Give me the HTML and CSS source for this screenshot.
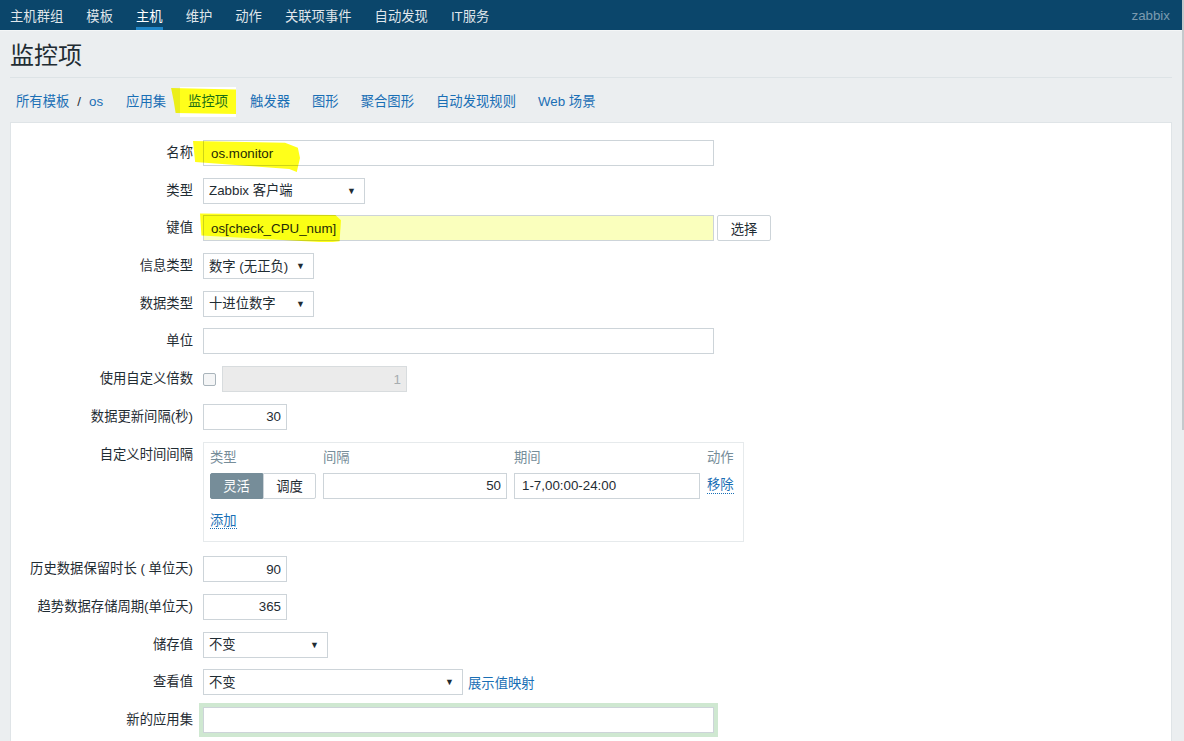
FILE: index.html
```html
<!DOCTYPE html>
<html lang="zh-CN">
<head>
<meta charset="utf-8">
<title>监控项</title>
<link rel="stylesheet" href="styles.css">
</head>
<body>
<div class="scrollbar"></div>
<header class="topnav">
  <nav class="menu">
    <a>主机群组</a>
    <a>模板</a>
    <a class="active">主机</a>
    <a>维护</a>
    <a>动作</a>
    <a>关联项事件</a>
    <a>自动发现</a>
    <a>IT服务</a>
  </nav>
  <span class="brand">zabbix</span>
</header>
<main class="content">
  <h1 class="title">监控项</h1>
  <ul class="tabs">
    <li class="crumbs"><a>所有模板</a><span class="sep">/</span><a>os</a></li>
    <li><a>应用集</a></li>
    <li class="selected"><a>监控项</a><span class="marker m-tab"></span></li>
    <li><a>触发器</a></li>
    <li><a>图形</a></li>
    <li><a>聚合图形</a></li>
    <li><a>自动发现规则</a></li>
    <li><a>Web 场景</a></li>
  </ul>
  <section class="card">
    <form class="form">
      <label class="lbl">名称</label>
      <div class="field">
        <span class="mark-wrap"><input class="txt w-wide" value="os.monitor"><span class="marker m-name"></span></span>
      </div>

      <label class="lbl">类型</label>
      <div class="field">
        <span class="select w-type"><select><option>Zabbix 客户端</option></select></span>
      </div>

      <label class="lbl">键值</label>
      <div class="field">
        <span class="mark-wrap"><input class="txt w-wide autofill" value="os[check_CPU_num]"><span class="marker m-key"></span></span>
        <button type="button" class="btn">选择</button>
      </div>

      <label class="lbl">信息类型</label>
      <div class="field">
        <span class="select w-small"><select><option>数字 (无正负)</option></select></span>
      </div>

      <label class="lbl">数据类型</label>
      <div class="field">
        <span class="select w-small"><select><option>十进位数字</option></select></span>
      </div>

      <label class="lbl">单位</label>
      <div class="field">
        <input class="txt w-wide" value="">
      </div>

      <label class="lbl">使用自定义倍数</label>
      <div class="field">
        <input type="checkbox" class="chk">
        <input class="txt w-mult num" value="1" disabled>
      </div>

      <label class="lbl">数据更新间隔(秒)</label>
      <div class="field">
        <input class="txt w-num num" value="30">
      </div>

      <label class="lbl">自定义时间间隔</label>
      <div class="field top">
        <div class="intervals">
          <div class="iv-grid">
            <span class="iv-head">类型</span>
            <span class="iv-head">间隔</span>
            <span class="iv-head">期间</span>
            <span class="iv-head">动作</span>

            <span class="seg"><button type="button" class="seg-btn on">灵活</button><button type="button" class="seg-btn">调度</button></span>
            <input class="txt num iv-input" value="50">
            <input class="txt iv-input" value="1-7,00:00-24:00">
            <a class="dlink">移除</a>
          </div>
          <div class="iv-add"><a class="dlink">添加</a></div>
        </div>
      </div>

      <label class="lbl">历史数据保留时长 ( 单位天)</label>
      <div class="field">
        <input class="txt w-num num" value="90">
      </div>

      <label class="lbl">趋势数据存储周期(单位天)</label>
      <div class="field">
        <input class="txt w-num num" value="365">
      </div>

      <label class="lbl">储存值</label>
      <div class="field">
        <span class="select w-store"><select><option>不变</option></select></span>
      </div>

      <label class="lbl">查看值</label>
      <div class="field">
        <span class="select w-show"><select><option>不变</option></select></span>
        <a class="link map-link">展示值映射</a>
      </div>

      <label class="lbl">新的应用集</label>
      <div class="field">
        <input class="txt w-wide focused" value="">
      </div>
    </form>
  </section>
</main>
</body>
</html>
```

FILE: styles.css
```css
* { box-sizing: border-box; }

body {
  margin: 0;
  background: #ebeef0;
  font-family: "Liberation Sans", "Noto Sans CJK SC", sans-serif;
  font-size: 13.33px;
  color: #1f2c33;
  overflow: hidden;
}

a { cursor: pointer; }

.scrollbar {
  position: fixed;
  top: 0;
  right: 0;
  width: 2px;
  height: 430px;
  background: #c4c9cc;
}

/* top navigation */
.topnav {
  display: flex;
  align-items: stretch;
  height: 31px;
  margin-right: 2px;
  background: #0b466b;
  border-bottom: 1px solid #f4f6f7;
}
.menu {
  display: flex;
  gap: 23px;
  padding-left: 10px;
}
.menu a {
  display: flex;
  align-items: center;
  height: 30px;
  color: rgba(255, 255, 255, 0.88);
  border-top: 3px solid transparent;
  border-bottom: 3px solid transparent;
}
.menu a.active {
  color: #fff;
  border-bottom-color: #1f86c8;
}
.brand {
  margin-left: auto;
  padding-right: 12px;
  display: flex;
  align-items: center;
  color: #7b9bb0;
}

/* content */
.content {
  padding: 0 12px 0 10px;
}
.title {
  margin: 0;
  padding: 10px 0 6px;
  font-size: 24px;
  font-weight: normal;
  line-height: 30px;
  color: #1f2c33;
  border-bottom: 1px solid #dde3e6;
}

.tabs {
  list-style: none;
  margin: 0;
  padding: 4px 0 0 6px;
  height: 44px;
  display: flex;
  align-items: center;
  gap: 22px;
}
.tabs li {
  position: relative;
  line-height: 16px;
}
.tabs a {
  position: relative;
  z-index: 2;
  color: #1a6fb5;
}
.crumbs {
  display: flex;
  gap: 8px;
  margin-right: 1px;
}
.sep { color: #1f2c33; }
.selected::before {
  content: "";
  position: absolute;
  left: -8px;
  right: -8px;
  top: -7px;
  bottom: -7px;
  background: #fff;
  z-index: 0;
}

/* yellow marker highlights */
.marker {
  position: absolute;
  background: #ffff1a;
  mix-blend-mode: multiply;
  z-index: 3;
  pointer-events: none;
}
.m-tab {
  left: -17px;
  right: -8px;
  top: -6px;
  bottom: -4px;
  clip-path: polygon(0 0, 100% 6%, 100% 100%, 7% 96%, 4% 50%);
}
.mark-wrap {
  position: relative;
  display: inline-flex;
}
.m-name {
  left: -10px;
  top: 1px;
  width: 107px;
  height: 31px;
  clip-path: polygon(0 0, 86% 6%, 98% 22%, 100% 55%, 97% 100%, 90% 90%, 2% 68%);
}
.m-key {
  left: -3px;
  top: -2px;
  width: 141px;
  height: 29px;
  clip-path: polygon(0 0, 96% 6%, 100% 24%, 99% 96%, 91% 100%, 1% 76%);
}

/* card and form */
.card {
  background: #fff;
  border: 1px solid #dfe4e7;
  height: 640px;
}
.form {
  display: grid;
  grid-template-columns: 182px 1fr;
  column-gap: 10px;
  row-gap: 11.7px;
  padding-top: 17px;
}
.lbl {
  text-align: right;
  line-height: 26px;
  white-space: nowrap;
}
.field {
  display: flex;
  align-items: center;
}
.field.top { align-items: flex-start; }

.txt {
  height: 26px;
  border: 1px solid #cdd4d9;
  padding: 0 7px;
  font: inherit;
  color: #1f2c33;
  background: #fff;
  outline: none;
}
.num { text-align: right; padding-right: 5px; }
.w-wide { width: 511px; }
.w-num { width: 84px; }
.w-mult { width: 185px; }
.autofill { background: #faffbd; }
.txt:disabled {
  background: #ebebeb;
  border-color: #d8dcde;
  color: #a7adb0;
}
.focused {
  box-shadow: 0 0 0 4px #cfe8d1;
}

.chk {
  -webkit-appearance: none;
  appearance: none;
  width: 13px;
  height: 13px;
  margin: 0 6px 0 0;
  border: 1px solid #a9b4bb;
  border-radius: 2px;
  background: #f4f5f6;
}

.btn {
  margin-left: 3px;
  width: 54px;
  height: 26px;
  border: 1px solid #cdd4d9;
  border-radius: 2px;
  background: #fff;
  font: inherit;
  color: #1f2c33;
  padding: 0;
}

.select {
  position: relative;
  display: inline-block;
}
.select select {
  -webkit-appearance: none;
  appearance: none;
  width: 100%;
  height: 26px;
  border: 1px solid #cdd4d9;
  border-radius: 0;
  background: #fff;
  font: inherit;
  color: #1f2c33;
  padding: 0 22px 0 5px;
  outline: none;
}
.select::after {
  content: "▼";
  position: absolute;
  right: 9px;
  top: 7px;
  font-size: 9px;
  line-height: 12px;
  color: #1f2c33;
  pointer-events: none;
}
.w-type { width: 162px; }
.w-small { width: 111px; }
.w-store { width: 125px; }
.w-show { width: 260px; }

.link { color: #1a6fb5; }
.map-link { margin-left: 5px; }

/* custom intervals */
.intervals {
  width: 541px;
  border: 1px solid #e6eaec;
  padding: 7px 7px 12px 6px;
  margin-bottom: 3px;
}
.iv-grid {
  display: grid;
  grid-template-columns: 106px 184px 186px auto;
  column-gap: 7px;
  row-gap: 7px;
  align-items: center;
}
.iv-head {
  color: #768d99;
  line-height: 16px;
}
.iv-grid .iv-head:last-of-type { text-align: right; }
.seg { display: flex; }
.seg-btn {
  width: 53px;
  height: 26px;
  padding: 0;
  font: inherit;
  border: 1px solid #cdd4d9;
  background: #fff;
  color: #1f2c33;
}
.seg-btn:first-child { border-radius: 2px 0 0 2px; }
.seg-btn:last-child { border-radius: 0 2px 2px 0; }
.seg-btn.on {
  background: #768d99;
  border-color: #768d99;
  color: #fff;
}
.iv-input { width: 100%; }
.dlink {
  color: #1a6fb5;
  border-bottom: 1px dotted #1a6fb5;
  line-height: 16px;
  justify-self: start;
}
.iv-add {
  margin-top: 14px;
  line-height: 16px;
}
```
